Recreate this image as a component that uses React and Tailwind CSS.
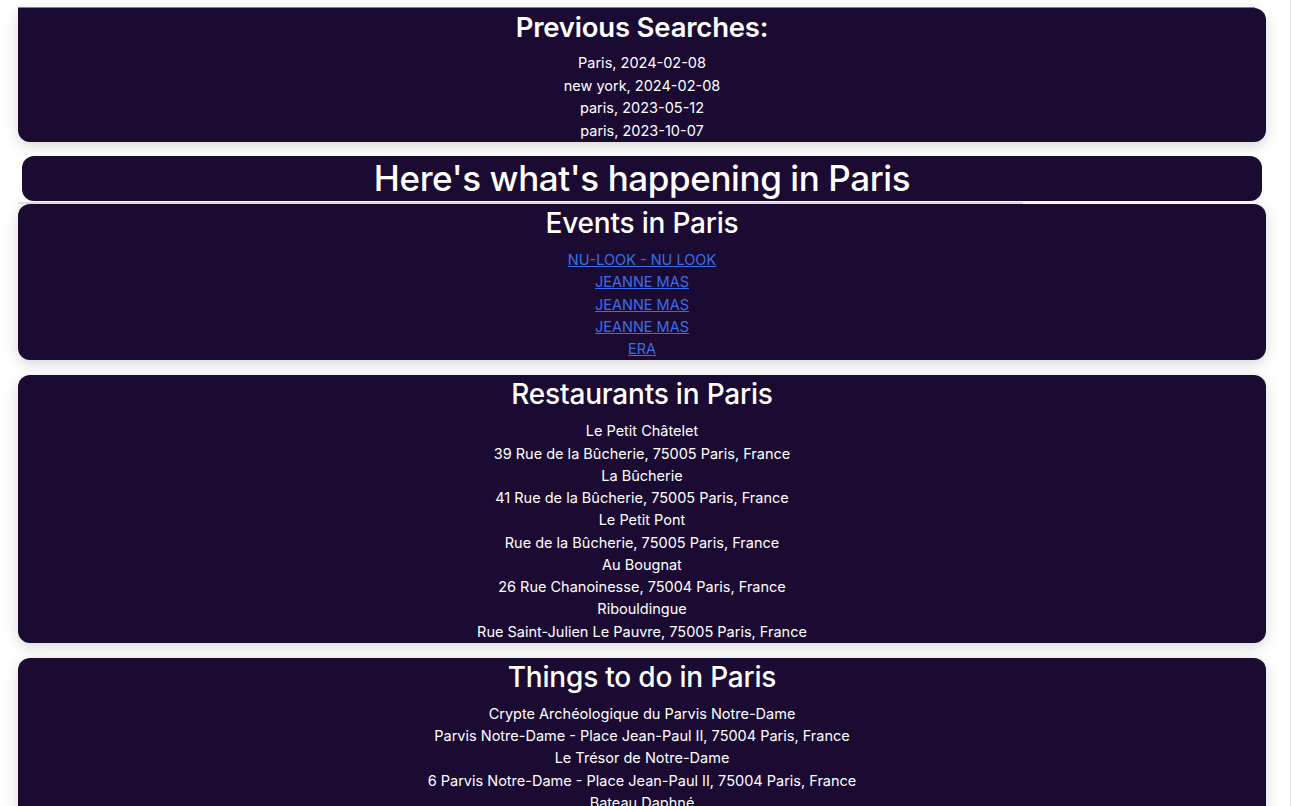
import React from "react";

const searches = ["Paris, 2024-02-08", "new york, 2024-02-08", "paris, 2023-05-12", "paris, 2023-10-07"];
const events = ["NU-LOOK - NU LOOK", "JEANNE MAS", "JEANNE MAS", "JEANNE MAS", "ERA"];
const restaurants = [
  "Le Petit Châtelet",
  "39 Rue de la Bûcherie, 75005 Paris, France",
  "La Bûcherie",
  "41 Rue de la Bûcherie, 75005 Paris, France",
  "Le Petit Pont",
  "Rue de la Bûcherie, 75005 Paris, France",
  "Au Bougnat",
  "26 Rue Chanoinesse, 75004 Paris, France",
  "Ribouldingue",
  "Rue Saint-Julien Le Pauvre, 75005 Paris, France",
];
const things = [
  "Crypte Archéologique du Parvis Notre-Dame",
  "Parvis Notre-Dame - Place Jean-Paul II, 75004 Paris, France",
  "Le Trésor de Notre-Dame",
  "6 Parvis Notre-Dame - Place Jean-Paul II, 75004 Paris, France",
  "Bateau Daphné",
  "Port de Montebello, 75005 Paris, France",
];

function Card({ title, children, className = "" }) {
  return (
    <section
      className={
        "mx-[18px] w-[1248px] rounded-xl bg-[#1b0b33] text-center text-white shadow-[0_4px_14px_rgba(0,0,0,0.16)] " +
        className
      }
    >
      <h2 className="text-[28px] font-medium leading-[38px] tracking-[-0.2px]">{title}</h2>
      <div className="mt-[7px] text-[14.5px] leading-[22.25px]">{children}</div>
    </section>
  );
}

export default function App() {
  return (
    <div className="flex min-h-[806px] bg-white font-['Inter',sans-serif]">
      <main className="w-[1290px] pt-[7px]">
        <div className="ml-[18px] h-px w-[1237px] bg-[#8a8095]" />
        <section className="mx-[18px] w-[1248px] rounded-b-xl rounded-tr-xl bg-[#1b0b33] text-center text-white shadow-[0_4px_14px_rgba(0,0,0,0.16)]">
          <h1 className="text-[27.5px] font-semibold leading-[38px] tracking-[-0.2px]">Previous Searches:</h1>
          <ul className="mt-[6px] text-[14.5px] leading-[22.5px]">
            {searches.map((s, i) => (
              <li key={i}>{s}</li>
            ))}
          </ul>
        </section>

        <div className="mt-[14px] mx-[22px] flex h-[45px] w-[1240px] items-center justify-center rounded-xl bg-[#1b0b33] text-white">
          <h1 className="text-[35px] font-medium leading-[45px] tracking-[-0.4px]">Here's what's happening in Paris</h1>
        </div>
        <div className="ml-[18px] mt-px h-[2px] w-[1005px] bg-[#e4e2e6]" />

        <Card title="Events in Paris" className="mt-0">
          <ul>
            {events.map((e, i) => (
              <li key={i}>
                <a href="#" className="text-[#3a6ee8] underline">
                  {e}
                </a>
              </li>
            ))}
          </ul>
        </Card>

        <Card title="Restaurants in Paris" className="mt-[15px]">
          <ul>
            {restaurants.map((r, i) => (
              <li key={i}>{r}</li>
            ))}
          </ul>
        </Card>

        <Card title="Things to do in Paris" className="mt-[15px]">
          <ul>
            {things.map((r, i) => (
              <li key={i}>{r}</li>
            ))}
          </ul>
        </Card>
      </main>
      <div className="w-[2px] border-l border-[#e6e6e6]" />
    </div>
  );
}
